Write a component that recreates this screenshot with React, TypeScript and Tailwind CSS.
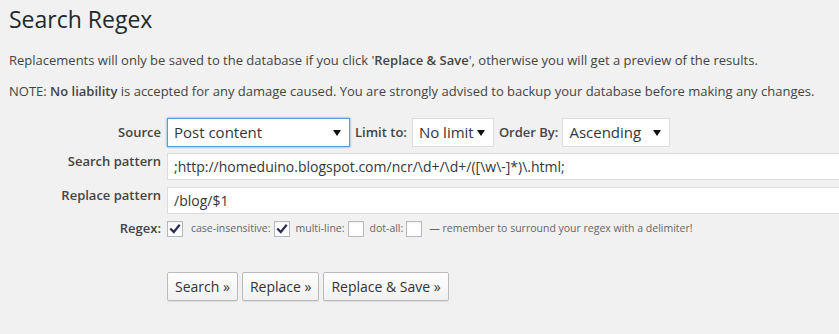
import React from "react";

const Check = ({ checked }: { checked: boolean }) => (
  <span className="inline-flex items-center justify-center w-[16px] h-[16px] border border-[#b4b9be] bg-white shadow-[inset_0_1px_2px_rgba(0,0,0,0.07)] shrink-0">
    {checked && (
      <svg width="12" height="12" viewBox="0 0 12 12">
        <path d="M2 6.2 L4.8 9 L10 2.6" fill="none" stroke="#2e2a5a" strokeWidth="2.2" strokeLinecap="square" />
      </svg>
    )}
  </span>
);

const Arrow = () => (
  <svg width="8" height="6" viewBox="0 0 8 6" className="shrink-0">
    <path d="M0 0 H8 L4 6 Z" fill="#111" />
  </svg>
);

const Select = ({ text, w, focus }: { text: string; w: string; focus?: boolean }) => (
  <div
    className={`${w} h-[29px] bg-white flex items-center justify-between pl-[6px] pr-[8px] text-[15px] text-[#32373c] border ${
      focus ? "border-[#5b9dd9] shadow-[0_0_2px_rgba(30,140,190,0.8)]" : "border-[#ddd]"
    }`}
  >
    <span>{text}</span>
    <Arrow />
  </div>
);

const Btn = ({ children }: { children: React.ReactNode }) => (
  <button className="h-[29px] px-[7px] text-[14px] text-[#333] bg-gradient-to-b from-[#fefefe] to-[#f1f1f1] border border-[#bbb] rounded-[2px] shadow-[0_1px_0_#ddd] leading-none">
    {children}
  </button>
);

export default function App() {
  return (
    <div
      className="w-[839px] h-[334px] bg-[#f1f1f1] text-[#444] overflow-hidden"
      style={{ fontFamily: '"Open Sans", sans-serif' }}
    >
      <h1 className="pl-[9px] pt-[5px] text-[23px] leading-[29px] text-[#23282d] font-normal">Search Regex</h1>
      <p className="pl-[9px] mt-[17px] text-[13px] leading-[18px]">
        Replacements will only be saved to the database if you click '<b className="font-semibold">Replace &amp; Save</b>', otherwise you will get a preview of the results.
      </p>
      <p className="pl-[9px] mt-[13px] text-[13px] leading-[18px]">
        NOTE: <b className="font-semibold">No liability</b> is accepted for any damage caused. You are strongly advised to backup your database before making any changes.
      </p>

      <div className="mt-[18px] flex flex-col">
        <div className="flex items-center h-[29px]">
          <div className="w-[162px] text-right pr-[1px] text-[13px] font-semibold">Source</div>
          <div className="ml-[5px] flex items-center">
            <Select text="Post content" w="w-[183px]" focus />
            <span className="ml-[5px] text-[13px] font-semibold">Limit to:</span>
            <div className="ml-[5px]"><Select text="No limit" w="w-[82px]" /></div>
            <span className="ml-[5px] text-[13px] font-semibold">Order By:</span>
            <div className="ml-[4px]"><Select text="Ascending" w="w-[108px]" /></div>
          </div>
        </div>

        <div className="flex mt-[6px]">
          <div className="w-[162px] text-right pr-[1px] text-[13px] leading-[16px] font-semibold">Search pattern</div>
          <div className="ml-[5px] flex-1 h-[27px] bg-white border border-[#ddd] border-r-0 flex items-center pl-[6px] text-[14px] text-[#32373c] whitespace-nowrap">
            ;http://homeduino.blogspot.com/ncr/\d+/\d+/([\w\-]*)\.html;
          </div>
        </div>

        <div className="flex mt-[7px]">
          <div className="w-[162px] text-right pr-[1px] text-[13px] leading-[16px] font-semibold">Replace pattern</div>
          <div className="ml-[5px] flex-1 h-[27px] bg-white border border-[#ddd] border-r-0 flex items-center pl-[6px] text-[14px] text-[#32373c] whitespace-nowrap">
            /blog/$1
          </div>
        </div>

        <div className="flex items-center mt-[6px] h-[18px]">
          <div className="w-[162px] text-right pr-[1px] text-[13px] font-semibold">Regex:</div>
          <div className="ml-[5px] flex items-center text-[10.5px] text-[#666]">
            <Check checked />
            <span className="ml-[8px] mr-[3px]">case-insensitive:</span>
            <Check checked />
            <span className="ml-[6px] mr-[3px]">multi-line:</span>
            <Check checked={false} />
            <span className="ml-[6px] mr-[3px]">dot-all:</span>
            <Check checked={false} />
            <span className="ml-[7px]">— remember to surround your regex with a delimiter!</span>
          </div>
        </div>

        <div className="flex mt-[34px] pl-[167px] gap-[4px]">
          <Btn>Search »</Btn>
          <Btn>Replace »</Btn>
          <Btn>Replace &amp; Save »</Btn>
        </div>
      </div>
    </div>
  );
}
